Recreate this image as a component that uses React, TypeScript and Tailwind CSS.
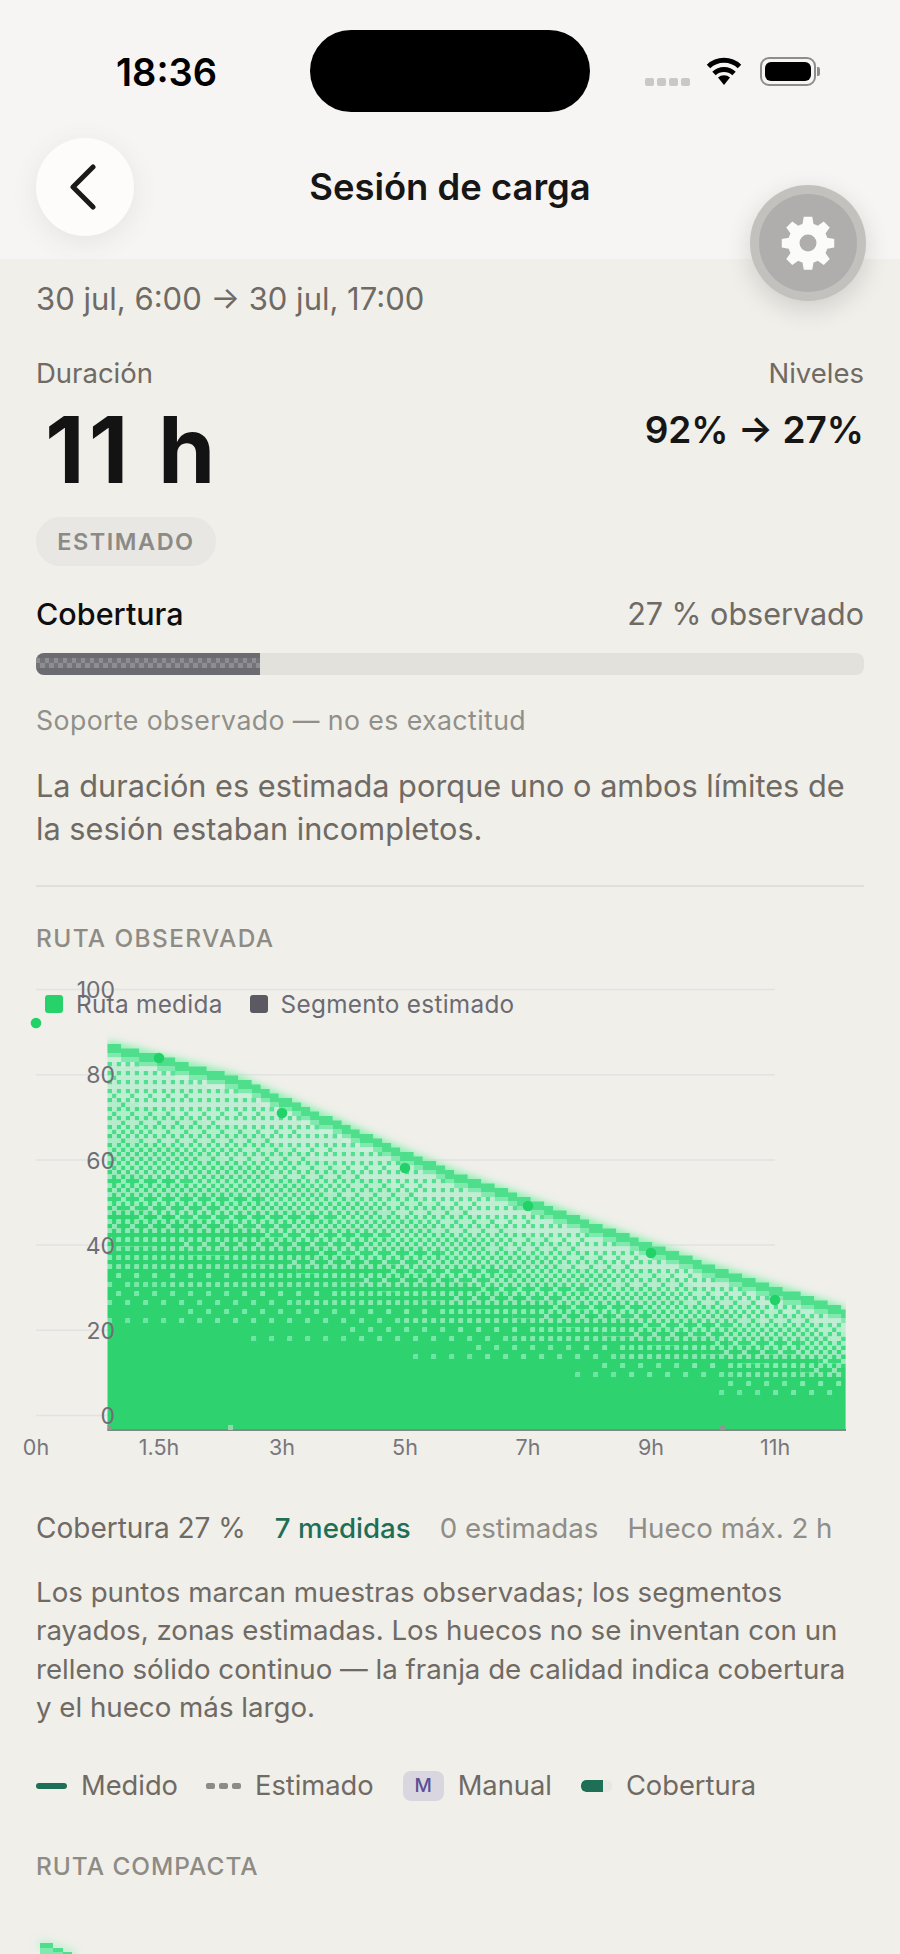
import React from "react";

const BAYER = [
  [0, 8, 2, 10],
  [12, 4, 14, 6],
  [3, 11, 1, 9],
  [15, 7, 13, 5],
];

function interp(pts: number[][], x: number) {
  for (let i = 0; i < pts.length - 1; i++) {
    const [a, b] = pts[i];
    const [c, d] = pts[i + 1];
    if (x <= c) return b + ((x - a) / (c - a)) * (d - b);
  }
  return pts[pts.length - 1][1];
}

function mix(a: number[], b: number[], t: number) {
  const k = Math.min(1, Math.max(0, t));
  return `rgb(${a.map((v, i) => Math.round(v + (b[i] - v) * k)).join(",")})`;
}

const TOP = [[107, 1043], [233, 1076], [333, 1120], [400, 1150], [450, 1171], [517, 1195], [630, 1237], [717, 1268], [846, 1310]];
const SOLID = [[107, 1330], [300, 1345], [500, 1368], [640, 1384], [846, 1408]];
const CELL = 4.5;
const LIGHT0 = [205, 238, 218];
const LIGHT1 = [102, 232, 160];
const HIGH0 = [92, 226, 152];
const HIGH1 = [45, 211, 111];

function buildLayers() {
  const layers: Record<string, string> = {};
  const add = (color: string, d: string) => {
    layers[color] = (layers[color] || "") + d;
  };
  const x0 = 107.5;
  const cols = Math.round((846 - x0) / CELL);
  for (let c = 0; c < cols; c++) {
    const x = x0 + c * CELL;
    const t0 = Math.round(interp(TOP, x) / CELL) * CELL;
    const s = interp(SOLID, x);
    const rows = Math.ceil((1430 - t0) / CELL);
    for (let r = 0; r < rows; r++) {
      const y = t0 + r * CELL;
      const rect = `M${x} ${y}h${CELL + 0.1}v${CELL + 0.1}h${-CELL - 0.1}z`;
      if (r < 2) {
        add("#4fdf8c", rect);
        continue;
      }
      if (r === 2) {
        add("#80e9ad", rect);
        continue;
      }
      const t = Math.min(1, Math.max(0, (y - t0) / (s - t0)));
      if (t >= 1) {
        add("rgb(45,211,111)", rect);
        continue;
      }
      const row = Math.round((y - 1000) / CELL);
      const th = (BAYER[((row % 4) + 4) % 4][c % 4] + 0.5) / 16;
      const qt = Math.round(t * 8) / 8;
      if (0.2 + 0.78 * t > th) add(mix(HIGH0, HIGH1, qt * 1.5), rect);
      else add(mix(LIGHT0, LIGHT1, qt), rect);
    }
  }
  return layers;
}

function MainChart() {
  const layers = buildLayers();
  const topPts = TOP.map(([a, b]) => `${a},${b + 2}`).join(" ");
  const gridY = [989.5, 1074.7, 1160, 1245, 1330.2, 1415.5];
  const yLabels = ["100", "80", "60", "40", "20", "0"];
  const dots = [[36, 1023], [159, 1058], [282, 1113], [405, 1168], [528, 1206], [651, 1253], [775, 1300]];
  const xLabels = [["0h", 36], ["1.5h", 159], ["3h", 282], ["5h", 405], ["7h", 528], ["9h", 651], ["11h", 775]] as [string, number][];
  return (
    <svg className="absolute left-0 top-[-960px]" width={900} height={1954}>
      <defs>
        <filter id="glow" x="-10%" y="-20%" width="120%" height="140%">
          <feGaussianBlur stdDeviation="4" />
        </filter>
        <filter id="soft" x="-2%" y="-2%" width="104%" height="104%">
          <feGaussianBlur stdDeviation="0.4" />
        </filter>
        <clipPath id="cl"><rect x="107" y="1000" width="739" height="431" /></clipPath>
        <clipPath id="clg"><rect x="107" y="1000" width="739" height="431" /></clipPath>
      </defs>
      {gridY.map((y) => (
        <line key={y} x1={36} x2={775} y1={y} y2={y} stroke="#e3e2e2" strokeWidth={1.5} />
      ))}
      <g clipPath="url(#clg)">
        <polyline points={topPts} fill="none" stroke="#6ff0a0" strokeWidth={8} filter="url(#glow)" />
      </g>
      <g filter="url(#soft)" clipPath="url(#cl)">
        {Object.entries(layers).map(([color, d]) => (
          <path key={color} d={d} fill={color} />
        ))}
      </g>
      <line x1={107.5} x2={846} y1={1430} y2={1430} stroke="#7f8a84" strokeWidth={2} />
      <rect x={107.5} y={1425} width={4} height={5} fill="#8a9a90" />
      <rect x={228} y={1425} width={5} height={5} fill="#8fd9ac" />
      <rect x={720} y={1425} width={5} height={5} fill="#8a9a90" />
      {dots.map(([x, y]) => (
        <circle key={x} cx={x} cy={y} r={5.3} fill="#22d268" />
      ))}
      {yLabels.map((l, i) => (
        <text key={l} x={115} y={gridY[i] + 8.5} textAnchor="end" fontSize={23} fill="#6f6e75" fontFamily="Inter, sans-serif">{l}</text>
      ))}
      {xLabels.map(([l, x]) => (
        <text key={l} x={x} y={1455} textAnchor="middle" fontSize={21.5} fill="#77767c" fontFamily="Inter, sans-serif">{l}</text>
      ))}
    </svg>
  );
}

function CompactChart() {
  return (
    <svg className="absolute left-0 top-0" width={90} height={34}>
      <defs>
        <filter id="glow2" x="-100%" y="-100%" width="300%" height="300%"><feGaussianBlur stdDeviation="5" /></filter>
      </defs>
      <line x1={40} y1={23} x2={76} y2={36} stroke="#8ff0b5" strokeWidth={5} filter="url(#glow2)" />
      <path d="M40 23h13v5H40zM53 28h10v4H53zM63 32h9v2h-9z" fill="#4fdf8c" />
      <path d="M40 28h13v6H40zM53 32h10v2H53z" fill="#80e9ad" />
    </svg>
  );
}

function Gear() {
  return (
    <svg width="60" height="60" viewBox="0 0 24 24" fill="#fbfbfa">
      <path fillRule="evenodd" d="M10.3 1.5h3.4l.5 2.9c.6.2 1.2.4 1.7.7l2.4-1.7 2.4 2.4-1.7 2.4c.3.5.5 1.1.7 1.7l2.8.5v3.4l-2.8.5c-.2.6-.4 1.2-.7 1.7l1.7 2.4-2.4 2.4-2.4-1.7c-.5.3-1.1.5-1.7.7l-.5 2.9h-3.4l-.5-2.9c-.6-.2-1.2-.4-1.7-.7l-2.4 1.7-2.4-2.4 1.7-2.4c-.3-.5-.5-1.1-.7-1.7l-2.8-.5v-3.4l2.8-.5c.2-.6.4-1.2.7-1.7L3.3 5.8l2.4-2.4 2.4 1.7c.5-.3 1.1-.5 1.7-.7l.5-2.9zM12 8.6a3.4 3.4 0 1 0 0 6.8 3.4 3.4 0 0 0 0-6.8z" />
    </svg>
  );
}

export default function App() {
  return (
    <div className="relative h-[1954px] w-[900px] overflow-hidden bg-[#f0efea] font-['Inter',sans-serif] text-[#6f6a64]">
      {/* Header */}
      <div className="relative h-[259px] bg-[#f6f5f3]">
        <div className="flex h-[138px] items-start">
          <div className="mt-[48px] w-[310px] pl-[116px] text-[38px] leading-[48px] font-semibold text-black">18:36</div>
          <div className="mt-[30px] h-[82px] w-[280px] rounded-[41px] bg-black" />
          <div className="mt-[57px] flex items-start pl-[55px]">
            <div className="mt-[21px] flex gap-[3px]">
              <i className="h-[8px] w-[9px] rounded-[2px] bg-[#c9c8c6]" />
              <i className="h-[8px] w-[9px] rounded-[2px] bg-[#c9c8c6]" />
              <i className="h-[8px] w-[9px] rounded-[2px] bg-[#c9c8c6]" />
              <i className="h-[8px] w-[9px] rounded-[2px] bg-[#c9c8c6]" />
            </div>
            <svg className="ml-[15px]" width="38" height="29" viewBox="0 0 38 29">
              <path d="M19 28 13 20.500a9 9 0 0 1 12 0z" fill="#000" />
              <path d="M9 16.500a14.500 14.500 0 0 1 20 0M3.500 9.500a22.500 22.500 0 0 1 31 0" fill="none" stroke="#000" strokeWidth="5" />
            </svg>
            <div className="relative ml-[17px] h-[29px] w-[56px] rounded-[9px] border-2 border-[#8d8d8d] p-[3px]">
              <div className="h-full w-full rounded-[6px] bg-black" />
              <div className="absolute right-[-6px] top-[8px] h-[9px] w-[3px] rounded-r-[2px] bg-[#8d8d8d]" />
            </div>
          </div>
        </div>
        <div className="relative flex items-center">
          <div className="ml-[36px] flex h-[98px] w-[98px] items-center justify-center rounded-full bg-[#fdfcfa] shadow-[0_6px_26px_rgba(90,85,100,0.10)]">
            <svg width="30" height="46" viewBox="0 0 30 46" fill="none" className="mr-[4px]">
              <path d="M25 3 5 23l20 20" stroke="#1a1a1a" strokeWidth="5" strokeLinecap="round" strokeLinejoin="round" />
            </svg>
          </div>
          <div className="absolute inset-x-0 text-center text-[36.400px] leading-[50px] font-semibold text-[#161616]">Sesión de carga</div>
        </div>
      </div>
      <div className="absolute left-[750px] top-[185px] z-10 flex h-[116px] w-[116px] items-center justify-center rounded-full bg-[#c2c1be] shadow-[0_8px_26px_rgba(0,0,0,0.14)]">
        <div className="flex h-[98px] w-[98px] items-center justify-center rounded-full bg-[#afaeac]">
          <Gear />
        </div>
      </div>

      {/* Body */}
      <div className="px-[36px]">
        <div className="mt-[19px] text-[31px] leading-[42px]">30 jul, 6:00 → 30 jul, 17:00</div>
        <div className="mt-[34px] flex justify-between">
          <div>
            <div className="text-[27.500px] leading-[38px]">Duración</div>
            <div className="mt-[8px] pl-[9px] text-[92px] leading-[100px] font-bold tracking-[4px] text-[#131313]">11 h</div>
          </div>
          <div className="flex flex-col items-end">
            <div className="text-[27.500px] leading-[38px]">Niveles</div>
            <div className="mt-[13px] text-[37px] leading-[50px] font-semibold text-[#161616]">92% → 27%</div>
          </div>
        </div>
        <div className="mt-[17px] flex h-[49px] w-[180px] items-center justify-center rounded-full bg-[#e8e7e3] text-[23.500px] font-semibold tracking-[1.500px] text-[#8c8a85]">ESTIMADO</div>
        <div className="mt-[27px] flex items-center justify-between leading-[42px]">
          <span className="text-[30.500px] font-medium text-[#0e0e0e]">Cobertura</span>
          <span className="text-[30.500px]">27 % observado</span>
        </div>
        <div className="mt-[18px] h-[22px] overflow-hidden rounded-[8px] bg-[#e2e1dc]">
          <div className="relative h-full w-[224px] bg-[#6c6b71]">
            <div className="absolute inset-x-0 top-[5px] h-[5px] bg-[repeating-linear-gradient(90deg,#8e8d91_0,#8e8d91_4.500px,#747378_4.500px,#747378_9px)]" />
            <div className="absolute inset-x-0 top-[10px] h-[5px] bg-[repeating-linear-gradient(90deg,#747378_0,#747378_4.500px,#8e8d91_4.500px,#8e8d91_9px)]" />
          </div>
        </div>
        <div className="mt-[27px] text-[26.700px] leading-[36px] tracking-[0.400px] text-[#918f89]">Soporte observado — no es exactitud</div>
        <div className="mt-[26px] text-[30.700px] leading-[43px]">La duración es estimada porque uno o ambos límites de<br />la sesión estaban incompletos.</div>
        <div className="mt-[35px] h-[2px] bg-[#e0dfda]" />
        <div className="mt-[34px] text-[24.400px] leading-[34px] font-medium tracking-[1.400px] text-[#8e8b85]">RUTA OBSERVADA</div>
      </div>

      {/* Chart */}
      <div className="absolute left-0 top-[960px] h-[522px] w-[900px]">
        <MainChart />
        <div className="absolute left-[45px] top-[27px] flex items-center text-[24.300px] leading-[34px] tracking-[0.300px] text-[#6b6a72]">
          <span className="h-[18px] w-[18px] rounded-[3px] bg-[#27d26b]" />
          <span className="ml-[13px]">Ruta medida</span>
          <span className="ml-[27px] h-[18px] w-[18px] rounded-[3px] bg-[#5b5a62]" />
          <span className="ml-[13px]">Segmento estimado</span>
        </div>
      </div>

      <div className="mt-[554px] px-[36px]">
        <div className="flex items-center text-[27.700px] leading-[38px]">
          <span className="text-[28px]">Cobertura 27 %</span>
          <span className="ml-[29px] font-medium text-[#1f6f57]">7 medidas</span>
          <span className="ml-[29px] text-[#8f8d88]">0 estimadas</span>
          <span className="ml-[29px] text-[#8f8d88]">Hueco máx. 2 h</span>
        </div>
        <div className="mt-[26px] text-[27.700px] leading-[38.300px]">
          Los puntos marcan muestras observadas; los segmentos<br />
          rayados, zonas estimadas. Los huecos no se inventan con un<br />
          relleno sólido continuo — la franja de calidad indica cobertura<br />
          y el hueco más largo.
        </div>
        <div className="mt-[41px] flex h-[38px] items-center text-[27.300px]">
          <span className="h-[6px] w-[31px] rounded-full bg-[#1f6f57]" />
          <span className="ml-[14px]">Medido</span>
          <span className="ml-[28px] flex gap-[4px]">
            <i className="h-[6px] w-[9px] rounded-[2px] bg-[#8d8b86]" />
            <i className="h-[6px] w-[9px] rounded-[2px] bg-[#8d8b86]" />
            <i className="h-[6px] w-[9px] rounded-[2px] bg-[#8d8b86]" />
          </span>
          <span className="ml-[14px]">Estimado</span>
          <span className="ml-[29px] flex h-[30px] w-[41px] items-center justify-center rounded-[8px] bg-[#d9d6e0] text-[19px] font-medium text-[#5c4f96]">M</span>
          <span className="ml-[14px]">Manual</span>
          <span className="ml-[29px] flex h-[12px] w-[31px] overflow-hidden rounded-[5px] bg-[#e8e7e3]">
            <i className="h-full w-[22px] rounded-l-[5px] bg-[#1f6f57]" />
          </span>
          <span className="ml-[14px]">Cobertura</span>
        </div>
        <div className="mt-[44px] text-[24.400px] leading-[34px] font-medium tracking-[1px] text-[#8e8b85]">RUTA COMPACTA</div>
      </div>
      <div className="absolute left-0 top-[1920px] h-[34px] w-[900px] overflow-hidden">
        <CompactChart />
      </div>
    </div>
  );
}
